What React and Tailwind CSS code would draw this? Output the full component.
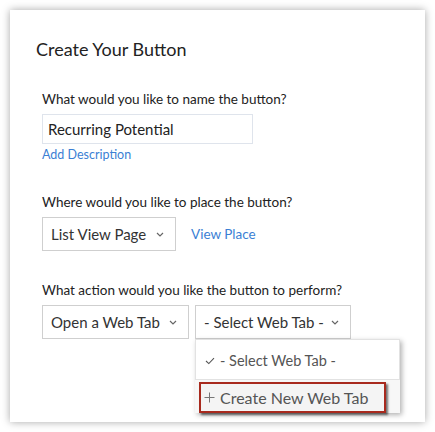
import React from 'react'

function Chevron() {
  return (
    <svg width="8" height="5" viewBox="0 0 8 5" className="shrink-0">
      <polyline points="1,1 4,4 7,1" fill="none" stroke="#666" strokeWidth="1.2" />
    </svg>
  )
}

function Select({ label, width, children }) {
  return (
    <div className={`relative ${width}`}>
      <div className="flex h-[34px] items-center justify-between border border-[#cfcfcf] bg-white pl-[8px] pr-[11px] text-[15px] text-[#333]">
        <span>{label}</span>
        <Chevron />
      </div>
      {children}
    </div>
  )
}

export default function App() {
  return (
    <div className="h-[432px] w-[435px] bg-white p-[10px] font-['Lato',sans-serif]">
      <div className="h-[412px] w-[415px] bg-white pl-[26px] pt-[28px] shadow-[0_0_8px_rgba(0,0,0,0.35)]">
        <h1 className="text-[18px] leading-[22px] text-[#222]">Create Your Button</h1>

        <div className="flex flex-col pl-[6px]">
          {/* name */}
          <p className="mt-[31px] text-[13.5px] leading-[16px] text-[#222]">What would you like to name the button?</p>
          <div className="mt-[7px] flex h-[30px] w-[211px] items-center border border-[#dfe4ec] pl-[5px] text-[15px] text-[#222]">
            Recurring Potential
          </div>
          <a className="mt-[3px] text-[12.5px] leading-[15px] text-[#3b7fd4]">Add Description</a>

          {/* place */}
          <p className="mt-[32px] text-[13.5px] leading-[16px] text-[#222]">Where would you like to place the button?</p>
          <div className="mt-[7px] flex items-center gap-[15px]">
            <Select label="List View Page" width="w-[134px]" />
            <a className="text-[13.5px] text-[#3b7fd4]">View Place</a>
          </div>

          {/* action */}
          <p className="mt-[31px] text-[13.5px] leading-[16px] text-[#222]">What action would you like the button to perform?</p>
          <div className="mt-[7px] flex gap-[6px]">
            <Select label="Open a Web Tab" width="w-[147px]" />
            <Select label="- Select Web Tab -" width="w-[156px]">
              <div className="absolute left-0 top-[34px] w-[205px] bg-white shadow-[2px_2px_5px_rgba(0,0,0,0.3)]">
                <div className="flex h-[40px] items-center gap-[5px] border border-b-0 border-[#e2e2e2] pl-[9px] pt-[2px] text-[14.5px] text-[#555]">
                  <svg width="10" height="8" viewBox="0 0 10 8">
                    <polyline points="1,4 3.8,6.6 9,1.2" fill="none" stroke="#555" strokeWidth="1.1" />
                  </svg>
                  <span>- Select Web Tab -</span>
                </div>
                <div className="h-[34px] border-t border-[#e2e2e2] bg-[#f7f7f7] pl-[4px] pt-[2px]">
                  <div className="flex h-[31px] w-[187px] items-center gap-[5px] border-2 border-[#a82a1e] bg-[#f4f4f4] pl-[3px] text-[16px] text-[#555] shadow-[2px_2px_2px_rgba(0,0,0,0.55)]">
                    <svg width="11" height="11" viewBox="0 0 11 11">
                      <path d="M5.5 0.5v10M0.5 5.5h10" stroke="#777" strokeWidth="1" />
                    </svg>
                    <span>Create New Web Tab</span>
                  </div>
                </div>
              </div>
            </Select>
          </div>
        </div>
      </div>
    </div>
  )
}
